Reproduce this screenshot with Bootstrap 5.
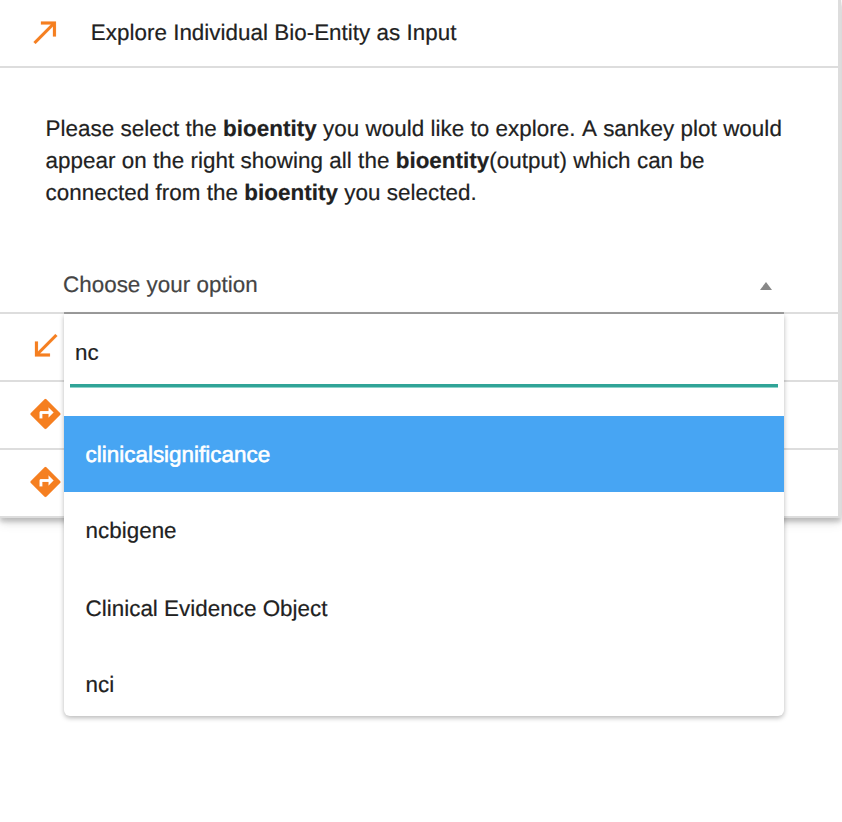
<!DOCTYPE html>
<html lang="en">
<head>
<meta charset="utf-8">
<meta name="viewport" content="width=device-width, initial-scale=1">
<title>Explore Bio-Entity</title>
<link href="https://cdn.jsdelivr.net/npm/bootstrap@5.3.0/dist/css/bootstrap.min.css" rel="stylesheet">
<style>
body{min-height:100vh;font-family:"Liberation Sans",Arial,sans-serif;font-size:22.4px;line-height:32px;letter-spacing:.025px;color:#212121;background:#fff;text-rendering:geometricPrecision;font-kerning:none;-webkit-text-stroke:.2px currentColor}
.panel-list{width:841px;border-right:3px solid #ddd;box-shadow:0 4px 4px rgba(0,0,0,.12),0 6px 10px rgba(0,0,0,.08),0 2px 8px rgba(0,0,0,.14)}
.panel-head{height:68px;border-bottom:2px solid #ddd;background:#fff}
.panel-head .glyph{width:36px;height:36px;margin:-2px 0 0 27px;flex:none;fill:#f57f20;stroke:#f57f20;stroke-width:.1px}
.panel-head .title{margin-left:27.800px}
.panel-body{height:246px;border-bottom:2px solid #ddd;padding:45px 50px 0 45.500px;background:#fff}
.intro{height:139px;white-space:nowrap;letter-spacing:.045px}
.picker{margin:0 4px 0 18.500px;height:62px;width:720px;border-bottom:2px solid #9e9e9e}
.picker-label{color:#444;margin:1px 0 0 -1px}
.caret{width:12px;height:8px;fill:#888;margin:14px 12px 0 0}
.picker-menu{top:62px;left:0;width:720px;height:402px;background:#fff;border-radius:0 0 6px 6px;box-shadow:0 2px 5px rgba(0,0,0,.28);z-index:5}
.search-box{display:block;width:708px;height:73px;margin:0 6px 29px;padding:7px 5px 0;border:0;border-bottom:3px solid #30a497;border-radius:0;outline:0;color:#212121;background:#fff;box-shadow:0 1px 0 #8fd3cb}
.option{height:77px;padding:0 22px 0 21.500px;white-space:nowrap}
.option.chosen{height:76px;padding-top:2px;background:#47a5f3;color:#fff;-webkit-text-stroke:.6px #fff}
.option.multiword{padding-top:2px}
</style>
</head>
<body>
<div class="panel-list">
  <div class="panel-head d-flex align-items-center">
    <svg class="glyph" viewBox="-.3 0 24 24"><path d="M9 5v2h6.590L4 18.590 5.410 20 17 8.410V15h2V5z"/></svg>
    <span class="title">Explore Individual Bio-Entity as Input</span>
  </div>
  <div class="panel-body">
    <p class="intro mb-0">Please select the <b>bioentity</b> you would like to explore. A sankey plot would<br>appear on the right showing all the <b>bioentity</b>(output) which can be<br>connected from the <b>bioentity</b> you selected.</p>
    <div class="picker position-relative">
      <div class="d-flex justify-content-between pt-3">
        <span class="picker-label">Choose your option</span>
        <svg class="caret" viewBox="0 0 12 8"><path d="M6 0l6 8H0z"/></svg>
      </div>
      <div class="picker-menu position-absolute">
        <input class="search-box" type="text" value="nc" aria-label="Search">
        <div class="option chosen d-flex align-items-center">clinicalsignificance</div>
        <div class="option d-flex align-items-center">ncbigene</div>
        <div class="option multiword d-flex align-items-center">Clinical Evidence Object</div>
        <div class="option d-flex align-items-center">nci</div>
      </div>
    </div>
  </div>
  <div class="panel-head d-flex align-items-center">
    <svg class="glyph" viewBox="-.3 0 24 24"><path d="M20 5.410L18.590 4 7 15.590V9H5v10h10v-2H8.410z"/></svg>
  </div>
  <div class="panel-head d-flex align-items-center">
    <svg class="glyph" viewBox="-.3 0 24 24"><path d="M21.710 11.290l-9-9c-.390-.390-1.020-.390-1.410 0l-9 9c-.390.390-.390 1.020 0 1.410l9 9c.390.390 1.020.390 1.410 0l9-9c.390-.380.390-1.010 0-1.410zM14 14.500V12h-4v3H8v-4c0-.550.450-1 1-1h5V7.500l3.500 3.500-3.500 3.500z"/></svg>
  </div>
  <div class="panel-head d-flex align-items-center">
    <svg class="glyph" viewBox="-.3 0 24 24"><path d="M21.710 11.290l-9-9c-.390-.390-1.020-.390-1.410 0l-9 9c-.390.390-.390 1.020 0 1.410l9 9c.390.390 1.020.390 1.410 0l9-9c.390-.380.390-1.010 0-1.410zM14 14.500V12h-4v3H8v-4c0-.550.450-1 1-1h5V7.500l3.500 3.500-3.500 3.500z"/></svg>
  </div>
</div>
<script src="https://cdn.jsdelivr.net/npm/bootstrap@5.3.0/dist/js/bootstrap.bundle.min.js"></script>
</body>
</html>
